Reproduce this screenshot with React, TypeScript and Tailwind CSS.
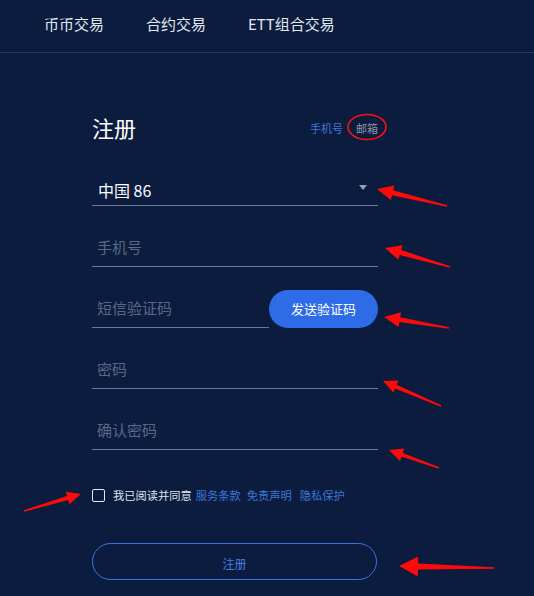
import React from 'react';

type Pt = [number, number];

// red annotation arrow: tail -> tip
const arrowPoints = (tail: Pt, tip: Pt, headLen: number, headW: number, shaftW: number) => {
  const dx = tip[0] - tail[0];
  const dy = tip[1] - tail[1];
  const len = Math.sqrt(dx * dx + dy * dy);
  const ux = dx / len;
  const uy = dy / len;
  const nx = -uy;
  const ny = ux;
  const bx = tip[0] - ux * headLen;
  const by = tip[1] - uy * headLen;
  const p = (x: number, y: number) => `${x.toFixed(1)},${y.toFixed(1)}`;
  return [
    p(tail[0] + nx * 0.8, tail[1] + ny * 0.8),
    p(bx + nx * shaftW / 2, by + ny * shaftW / 2),
    p(bx + nx * headW / 2, by + ny * headW / 2),
    p(tip[0], tip[1]),
    p(bx - nx * headW / 2, by - ny * headW / 2),
    p(bx - nx * shaftW / 2, by - ny * shaftW / 2),
    p(tail[0] - nx * 0.8, tail[1] - ny * 0.8),
  ].join(' ');
};

const arrows: { tail: Pt; tip: Pt; head: number; w: number; shaft: number }[] = [
  { tail: [447, 206], tip: [377, 189], head: 16, w: 15, shaft: 5 },
  { tail: [450, 267], tip: [385, 248], head: 16, w: 15, shaft: 5 },
  { tail: [449, 328], tip: [384, 317], head: 16, w: 15, shaft: 5 },
  { tail: [441, 406], tip: [383, 381], head: 14, w: 13, shaft: 4 },
  { tail: [439, 468], tip: [389, 450], head: 14, w: 13, shaft: 4 },
  { tail: [24, 511], tip: [81, 494], head: 14, w: 13, shaft: 4 },
  { tail: [494, 568], tip: [399, 566], head: 19, w: 20, shaft: 6 },
];

const Field = ({ placeholder }: { placeholder: string }) => (
  <div className="mt-[21px] h-[40px] border-b border-[#6e7a96] pt-[2px] flex items-center">
    <input
      placeholder={placeholder}
      className="w-full bg-transparent outline-none pl-[5px] text-[15px] text-white placeholder:text-[#5b6886]"
    />
  </div>
);

const App = () => {
  return (
    <div className="relative min-h-[596px] w-full bg-[#0b1c3f] font-['Noto_Sans_CJK_SC','Liberation_Sans',sans-serif] overflow-hidden">
      {/* 상단 메뉴 */}
      <div className="h-[53px] border-b border-[#22365d] flex items-center gap-[42px] pl-[44px] pb-[3px] text-[15px] text-[#e4e8f0]">
        <span>币币交易</span>
        <span>合约交易</span>
        <span>ETT组合交易</span>
      </div>

      <div className="pl-[92px] w-[378px]">
        <div className="mt-[57px] h-9 flex items-center justify-between">
          <h2 className="text-[22px] text-white leading-none mb-[3px]">注册</h2>
          <div className="flex items-center gap-[13px] text-[11px]">
            <span className="text-[#3f74d6]">手机号</span>
            <span className="text-[#8b93a6]">邮箱</span>
          </div>
        </div>

        {/* 국가 선택 */}
        <div className="mt-[20px] h-[40px] border-b border-[#6e7a96] pt-[8px] flex items-center justify-between pl-[6px] pr-[11px]">
          <span className="text-[16px] text-white">中国 86</span>
          <span className="mb-[5px] w-0 h-0 border-l-[4px] border-r-[4px] border-t-[5px] border-l-transparent border-r-transparent border-t-[#9aa2b4]" />
        </div>

        <Field placeholder="手机号" />

        <div className="mt-[21px] flex items-end">
          <div className="w-[177px] h-[40px] border-b border-[#6e7a96] pt-[2px] flex items-center">
            <input
              placeholder="短信验证码"
              className="w-full bg-transparent outline-none pl-[5px] text-[15px] text-white placeholder:text-[#5b6886]"
            />
          </div>
          <button className="w-[109px] h-[38px] rounded-full bg-[#2e6be6] text-white text-[13px]">
            发送验证码
          </button>
        </div>

        <Field placeholder="密码" />
        <Field placeholder="确认密码" />

        <div className="mt-[39px] h-[13px] flex items-center text-[11.25px] whitespace-nowrap">
          <span className="w-[13px] h-[13px] border border-[#e6e9ef] rounded-[2px] shrink-0" />
          <span className="ml-[8px] text-[#dfe3ea]">我已阅读并同意</span>
          <span className="ml-[4px] text-[#3f74d6]">服务条款</span>
          <span className="ml-[6px] text-[#3f74d6]">免责声明</span>
          <span className="ml-[8px] text-[#3f74d6]">隐私保护</span>
        </div>

        <button className="mt-[41px] w-[285px] h-[37px] pt-[4px] rounded-full border border-[#3a76dc] text-[#4a7fe0] text-[12px]">
          注册
        </button>
      </div>

      {/* 빨간 표시 */}
      <svg className="absolute left-0 top-0 pointer-events-none" width="534" height="596">
        <ellipse cx="367" cy="127" rx="19" ry="12.5" fill="none" stroke="#ff1010" strokeWidth="1.6" />
        {arrows.map((a, i) => (
          <polygon key={i} points={arrowPoints(a.tail, a.tip, a.head, a.w, a.shaft)} fill="#ff0a0a" />
        ))}
      </svg>
    </div>
  );
};

export default App;
